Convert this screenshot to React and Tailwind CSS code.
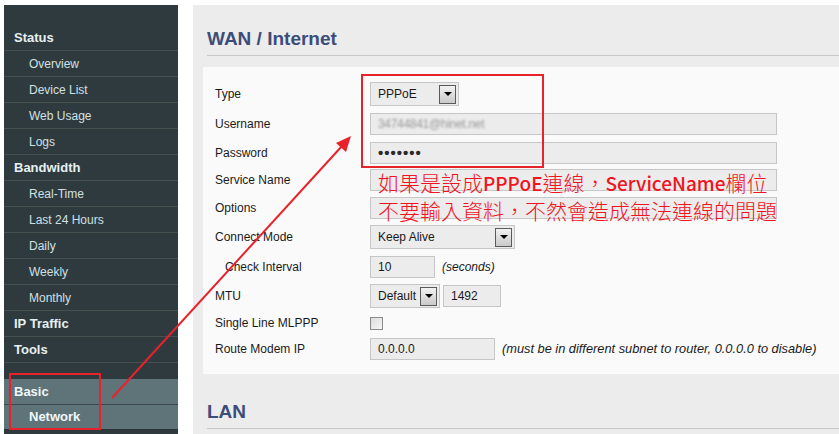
import React from 'react';

const menu = [
  { label: 'Status', head: true },
  { label: 'Overview' },
  { label: 'Device List' },
  { label: 'Web Usage' },
  { label: 'Logs' },
  { label: 'Bandwidth', head: true },
  { label: 'Real-Time' },
  { label: 'Last 24 Hours' },
  { label: 'Daily' },
  { label: 'Weekly' },
  { label: 'Monthly' },
  { label: 'IP Traffic', head: true },
  { label: 'Tools', head: true },
];

const cjk = { fontFamily: '"Noto Sans CJK TC", sans-serif' };

const DropBtn = () => (
  <div className="w-[17px] h-[19px] border border-[#5a5a5a] bg-gradient-to-b from-[#f2f2f2] to-[#c9c9c9] flex items-center justify-center">
    <div className="w-0 h-0 border-l-[4px] border-r-[4px] border-t-[4px] border-l-transparent border-r-transparent border-t-black" />
  </div>
);

const Select = ({ value, w }) => (
  <div className={`${w} h-[24px] border border-[#c6c6c6] bg-[#ececec] flex items-center justify-between pl-[7px] pr-[2px]`}>
    <span>{value}</span>
    <DropBtn />
  </div>
);

const Input = ({ w, children, className = '' }) => (
  <div className={`${w} h-[22px] border border-[#c6c6c6] bg-[#ececec] flex items-center pl-[7px] ${className}`}>
    {children}
  </div>
);

const Row = ({ label, h, indent, children }) => (
  <div className={`flex items-center ${h}`}>
    <div className={`w-[155px] shrink-0 ${indent ? 'pl-[10px]' : ''}`}>{label}</div>
    <div className="flex items-center gap-[7px]">{children}</div>
  </div>
);

export default function App() {
  return (
    <div className="relative w-[839px] h-[434px] overflow-hidden bg-white flex pt-[5px] pl-[4px] text-[12px] text-[#1a1a1a]" style={{ fontFamily: '"Liberation Sans", Arial, sans-serif' }}>
      <aside className="w-[174px] shrink-0 bg-[#2f3a3e] pt-[20px]">
        {menu.map(m => (
          <div key={m.label} className={`h-[26px] border-b border-[#46514f] flex items-center ${m.head ? 'pl-[10px] font-bold text-[13px] text-[#e6f0f2]' : 'pl-[25px] text-[#cfe0e4]'}`}>
            {m.label}
          </div>
        ))}
        <div className="h-[16px]" />
        <div className="bg-[#5e7478]">
          <div className="h-[26px] border-b border-[#3d484a] flex items-center pl-[10px] font-bold text-[13px] text-[#f2f7f8]">Basic</div>
          <div className="h-[25px] border-b border-[#2a3336] flex items-center pl-[25px] font-bold text-[13px] text-[#f2f7f8]">Network</div>
        </div>
      </aside>

      <main className="flex-1 ml-[15px] bg-[#ececec] pl-[10px]">
        <div className="ml-[4px] pt-[24px] pb-[6px] border-b border-[#c8c8c8]">
          <h1 className="text-[19px] leading-[20px] font-bold text-[#3d4d7a]">WAN / Internet</h1>
        </div>

        <div className="mt-[11px] bg-[#fafafa] pl-[12px] pt-[13px] pb-[12px]">
          <Row label="Type" h="h-[28px]"><Select value="PPPoE" w="w-[89px]" /></Row>
          <Row label="Username" h="h-[31px]">
            <Input w="w-[407px]"><span className="text-[#9a9a9a] blur-[0.8px] tracking-tight">34744841@hinet.net</span></Input>
          </Row>
          <Row label="Password" h="h-[27px]">
            <Input w="w-[407px]"><span className="text-[15px] font-bold text-[#2a2a2a] tracking-[1px] leading-none">•••••••</span></Input>
          </Row>
          <Row label="Service Name" h="h-[28px]">
            <Input w="w-[407px]" className="overflow-visible whitespace-nowrap">
              <span className="text-[21px] leading-none font-light text-[#f0141e] pt-[4px]" style={cjk}>
                如果是設成<span className="font-medium text-[19px]">PPPoE</span>連線，<span className="font-medium text-[19px]">ServiceName</span>欄位
              </span>
            </Input>
          </Row>
          <Row label="Options" h="h-[28px]">
            <Input w="w-[407px]" className="overflow-visible whitespace-nowrap">
              <span className="text-[21px] leading-none font-light text-[#f0141e] pt-[4px]" style={cjk}>
                不要輸入資料，不然會造成無法連線的問題
              </span>
            </Input>
          </Row>
          <Row label="Connect Mode" h="h-[30px]"><Select value="Keep Alive" w="w-[145px]" /></Row>
          <Row label="Check Interval" h="h-[30px]" indent>
            <Input w="w-[65px]">10</Input>
            <span className="italic">(seconds)</span>
          </Row>
          <Row label="MTU" h="h-[28px]">
            <div className="flex items-center gap-[3px]">
              <Select value="Default" w="w-[70px]" />
              <Input w="w-[58px]">1492</Input>
            </div>
          </Row>
          <Row label="Single Line MLPPP" h="h-[26px]">
            <div className="w-[13px] h-[13px] border border-[#8a8a8a] bg-gradient-to-br from-[#dcdcdc] to-[#f6f6f6]" />
          </Row>
          <Row label="Route Modem IP" h="h-[26px]">
            <Input w="w-[125px]">0.0.0.0</Input>
            <span className="italic whitespace-nowrap text-[12.8px]">(must be in different subnet to router, 0.0.0.0 to disable)</span>
          </Row>
        </div>

        <div className="ml-[4px] pt-[28px] pb-[6px] border-b border-[#c8c8c8]">
          <h2 className="text-[19px] leading-[20px] font-bold text-[#3d4d7a]">LAN</h2>
        </div>
      </main>

      <svg className="absolute inset-0 pointer-events-none" width="839" height="434" viewBox="0 0 839 434">
        <rect x="362" y="75" width="181" height="92" fill="none" stroke="#e8222b" strokeWidth="2" />
        <rect x="10" y="374" width="90" height="55" fill="none" stroke="#e8222b" strokeWidth="2" />
        <line x1="112" y1="398" x2="342" y2="146" stroke="#e8222b" strokeWidth="2" />
        <polygon points="351,136 336,143 346,152" fill="#e8222b" />
      </svg>
    </div>
  );
}
